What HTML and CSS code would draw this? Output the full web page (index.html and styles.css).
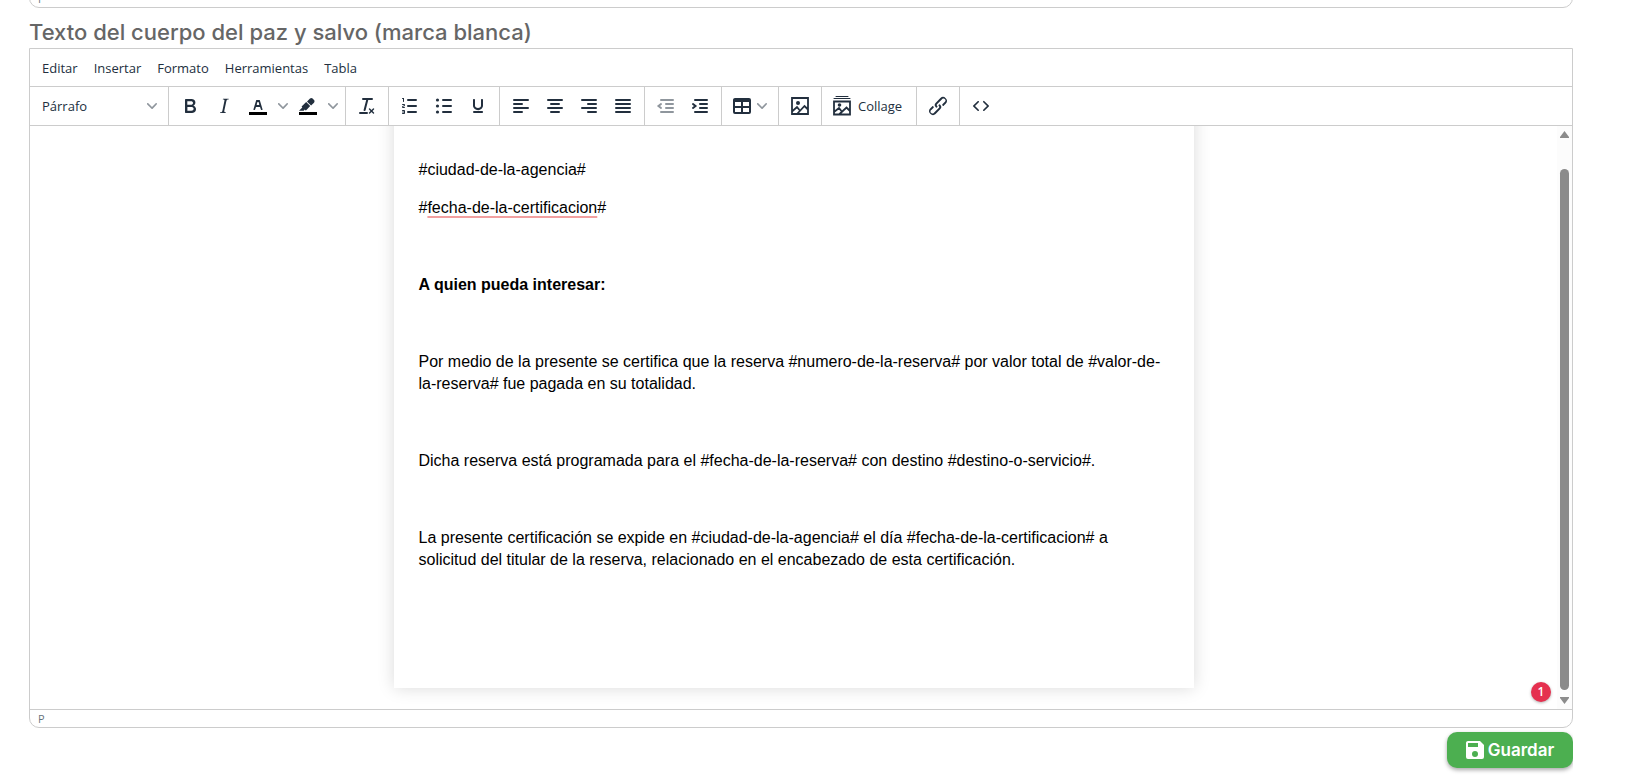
FILE: index.html
```html
<!DOCTYPE html>
<html lang="es">
<head>
	<meta charset="UTF-8">
	<title>Paz y salvo</title>
	<link rel="stylesheet" href="styles.css">
</head>
<body>
	<div class="wrap">
		<div class="editor prev">
			<div class="status">P</div>
		</div>

		<h2 class="title" id="titulo">Texto del cuerpo del paz y salvo (marca blanca)</h2>

		<div class="editor">
			<div class="menubar">
				<button type="button">Editar</button>
				<button type="button">Insertar</button>
				<button type="button">Formato</button>
				<button type="button">Herramientas</button>
				<button type="button">Tabla</button>
			</div>

			<div class="toolbar">
				<div class="group">
					<div class="select">
						<select aria-label="Formato de bloque">
							<option>Párrafo</option>
						</select>
						<svg class="arrow" viewBox="0 0 10 10"><path d="M8.7 2.2c.3-.3.8-.3 1 0 .4.4.4.9 0 1.2L5.7 7.8c-.3.3-.9.3-1.2 0L.2 3.4a.8.8 0 0 1 0-1.2c.3-.3.8-.3 1.1 0L5 6l3.7-3.8Z"/></svg>
					</div>
				</div>
				<div class="group">
					<button type="button" aria-label="Negrita"><svg viewBox="0 0 24 24"><path fill-rule="evenodd" d="M7.8 19c-.3 0-.5 0-.6-.2l-.2-.5V5.7c0-.2 0-.4.2-.5l.6-.2h5c1.5 0 2.7.3 3.5 1 .7.6 1.1 1.4 1.1 2.5a3 3 0 0 1-.6 1.9c-.4.6-1 1-1.6 1.2.4.1.9.3 1.3.6s.8.7 1 1.2c.4.4.5 1 .5 1.6 0 1.3-.4 2.3-1.3 3-.8.7-2.1 1-3.8 1H7.8Zm5-8.3c.6 0 1.2-.1 1.6-.5.4-.3.6-.7.6-1.3 0-1.1-.8-1.7-2.3-1.7H9.3v3.5h3.4Zm.5 6c.7 0 1.3-.1 1.7-.4.4-.4.6-.9.6-1.5s-.2-1-.7-1.4c-.4-.3-1-.4-2-.4H9.4v3.8h4Z"/></svg></button>
					<button type="button" aria-label="Cursiva"><svg viewBox="0 0 24 24"><path d="m16.7 4.7-.1.9h-.3c-.6 0-1 0-1.4.3-.3.3-.4.6-.5 1.1l-2.1 9.8v.6c0 .5.4.8 1.4.8h.2l-.2.8H8l.2-.8h.2c1.1 0 1.8-.5 2-1.5l2-9.8.1-.5c0-.6-.4-.8-1.4-.8h-.3l.2-.9h5.8Z"/></svg></button>
					<button type="button" class="split" aria-label="Color de texto">
						<svg viewBox="0 0 24 24"><path class="color" d="M3 18h18v3H3z"/><path fill-rule="evenodd" d="M8.7 16h-.8a.5.5 0 0 1-.5-.6l2.7-9c.1-.3.3-.4.5-.4h2.8c.2 0 .4.1.5.4l2.7 9a.5.5 0 0 1-.5.6h-.8a.5.5 0 0 1-.4-.4l-.7-2.2c0-.3-.3-.4-.5-.4h-3.4c-.2 0-.4.1-.5.4l-.7 2.2c0 .3-.2.4-.4.4Zm2.6-7.6-.6 2a.5.5 0 0 0 .5.6h1.6a.5.5 0 0 0 .5-.6l-.6-2c0-.3-.3-.4-.5-.4h-.4c-.2 0-.4.1-.5.4Z"/></svg>
						<svg class="arrow" viewBox="0 0 10 10"><path d="M8.7 2.2c.3-.3.8-.3 1 0 .4.4.4.9 0 1.2L5.7 7.8c-.3.3-.9.3-1.2 0L.2 3.4a.8.8 0 0 1 0-1.2c.3-.3.8-.3 1.1 0L5 6l3.7-3.8Z"/></svg>
					</button>
					<button type="button" class="split" aria-label="Color de fondo">
						<svg viewBox="0 0 24 24"><path class="color" d="M3 18h18v3H3z"/><path d="M7.7 16.7H3l3.3-3.3-.7-.8L10.2 8l4 4.1-4 4.2c-.2.2-.6.2-.8 0l-.6-.7-1.1 1.1Zm5-7.5L11 7.4l3-2.9a2 2 0 0 1 2.6 0L18 6c.7.7.7 2 0 2.7l-2.9 2.9-1.8-1.8-.6-.6Z"/></svg>
						<svg class="arrow" viewBox="0 0 10 10"><path d="M8.7 2.2c.3-.3.8-.3 1 0 .4.4.4.9 0 1.2L5.7 7.8c-.3.3-.9.3-1.2 0L.2 3.4a.8.8 0 0 1 0-1.2c.3-.3.8-.3 1.1 0L5 6l3.7-3.8Z"/></svg>
					</button>
				</div>
				<div class="group">
					<button type="button" aria-label="Borrar formato"><svg viewBox="0 0 24 24"><path d="M13.2 6a1 1 0 0 1 0 .2l-2.6 10a1 1 0 0 1-1 .8h-.2a.8.8 0 0 1-.8-1l2.6-10H8a1 1 0 1 1 0-2h9a1 1 0 0 1 0 2h-3.8ZM5 18h7a1 1 0 0 1 0 2H5a1 1 0 0 1 0-2Zm13 1.5L16.5 18 15 19.5a.7.7 0 0 1-1-1l1.5-1.5-1.5-1.5a.7.7 0 0 1 1-1l1.5 1.5 1.5-1.5a.7.7 0 0 1 1 1L17.5 17l1.5 1.5a.7.7 0 0 1-1 1Z"/></svg></button>
				</div>
				<div class="group">
					<button type="button" aria-label="Lista numerada"><svg viewBox="0 0 24 24"><path class="line" d="M10 6h8M10 12h8M10 18h8"/><path d="M6 4v3.5c0 .3-.2.5-.5.5a.5.5 0 0 1-.5-.5V5h-.5a.5.5 0 0 1 0-1H6Zm-1 8.8.2.2h1.3c.3 0 .5.2.5.5s-.2.5-.5.5H4.9a1 1 0 0 1-.9-1V13c0-.4.3-.8.6-1l1.2-.4.2-.3a.2.2 0 0 0-.2-.2H4.5a.5.5 0 0 1-.5-.5c0-.3.2-.5.5-.5h1.6c.5 0 .9.4.9 1v.1c0 .4-.3.8-.6 1l-1.2.4-.2.3ZM7 17v2c0 .6-.4 1-1 1H4.5a.5.5 0 0 1 0-1h1.2c.2 0 .3-.1.3-.3 0-.2-.1-.3-.3-.3H4.4a.4.4 0 1 1 0-.8h1.3c.2 0 .3-.1.3-.3 0-.2-.1-.3-.3-.3H4.5a.5.5 0 1 1 0-1H6c.6 0 1 .4 1 1Z"/></svg></button>
					<button type="button" aria-label="Lista de viñetas"><svg viewBox="0 0 24 24"><path class="line" d="M11 6h8M11 12h8M11 18h8"/><circle cx="5.5" cy="6" r="1.6"/><circle cx="5.5" cy="12" r="1.6"/><circle cx="5.5" cy="18" r="1.6"/></svg></button>
					<button type="button" aria-label="Subrayado"><svg viewBox="0 0 24 24"><path d="M16 5c.6 0 1 .4 1 1v5.5a4 4 0 0 1-.4 1.8l-1 1.4a5.3 5.3 0 0 1-5.5 1 5 5 0 0 1-1.6-1c-.5-.4-.8-.9-1.1-1.4a4 4 0 0 1-.4-1.8V6c0-.6.4-1 1-1s1 .4 1 1v5.5c0 .3 0 .6.2 1l.6.7a3.3 3.3 0 0 0 2.2.8 3.4 3.4 0 0 0 2.2-.8c.3-.2.4-.5.6-.8l.2-.9V6c0-.6.4-1 1-1ZM8 17h8c.6 0 1 .4 1 1s-.4 1-1 1H8a1 1 0 0 1 0-2Z"/></svg></button>
				</div>
				<div class="group">
					<button type="button" aria-label="Alinear a la izquierda"><svg viewBox="0 0 24 24"><path class="line" d="M5 6h14M5 10h8M5 14h14M5 18h8"/></svg></button>
					<button type="button" aria-label="Alinear al centro"><svg viewBox="0 0 24 24"><path class="line" d="M5 6h14M8 10h8M5 14h14M8 18h8"/></svg></button>
					<button type="button" aria-label="Alinear a la derecha"><svg viewBox="0 0 24 24"><path class="line" d="M5 6h14M11 10h8M5 14h14M11 18h8"/></svg></button>
					<button type="button" aria-label="Justificar"><svg viewBox="0 0 24 24"><path class="line" d="M5 6h14M5 10h14M5 14h14M5 18h14"/></svg></button>
				</div>
				<div class="group">
					<button type="button" aria-label="Disminuir sangría" disabled><svg viewBox="0 0 24 24"><path class="line" d="M7 6h12M12 10h7M12 14h7M7 18h12"/><path class="line" d="M7 10l-2.500 2L7 14"/></svg></button>
					<button type="button" aria-label="Incrementar sangría"><svg viewBox="0 0 24 24"><path class="line" d="M7 6h12M12 10h7M12 14h7M7 18h12"/><path class="line" d="M5 10l2.500 2L5 14"/></svg></button>
				</div>
				<div class="group">
					<button type="button" class="split menu" aria-label="Tabla">
						<svg viewBox="0 0 24 24"><path fill-rule="evenodd" d="M19 4a2 2 0 0 1 2 2v12a2 2 0 0 1-2 2H5a2 2 0 0 1-2-2V6c0-1.1.9-2 2-2h14ZM5 14v4h6v-4H5Zm14 0h-6v4h6v-4Zm0-6h-6v4h6V8ZM5 12h6V8H5v4Z"/></svg>
						<svg class="arrow" viewBox="0 0 10 10"><path d="M8.7 2.2c.3-.3.8-.3 1 0 .4.4.4.9 0 1.2L5.7 7.8c-.3.3-.9.3-1.2 0L.2 3.4a.8.8 0 0 1 0-1.2c.3-.3.8-.3 1.1 0L5 6l3.7-3.8Z"/></svg>
					</button>
				</div>
				<div class="group">
					<button type="button" aria-label="Imagen"><svg viewBox="0 0 24 24"><path class="thin" d="M4 4h16v16H4zM4 17.500l5-4.500 2 2.500M9 20l7.500-8 3.500 3.500"/><circle cx="10" cy="9" r="2"/></svg></button>
				</div>
				<div class="group">
					<button type="button" class="text"><svg viewBox="0 0 24 24"><path class="hair" d="M6 2.500h12M4 4.500h16"/><path class="thin" d="M4 7.500h16v13H4zM4 18l5-4 2 2.500M9 20.500l7.500-7 3.500 3.500"/><circle cx="9.500" cy="11" r="1.800"/></svg>Collage</button>
				</div>
				<div class="group">
					<button type="button" aria-label="Enlace"><svg viewBox="0 0 24 24"><path d="M6.2 12.3a1 1 0 0 1 1.4 1.4l-2 2a2 2 0 1 0 2.6 2.8l4.8-4.8a1 1 0 0 0 0-1.4 1 1 0 1 1 1.4-1.3 2.9 2.9 0 0 1 0 4L9.6 20a3.9 3.9 0 0 1-5.5-5.5l2-2Zm11.6-.6a1 1 0 0 1-1.4-1.4l2-2a2 2 0 1 0-2.6-2.8L11 10.3a1 1 0 0 0 0 1.4A1 1 0 1 1 9.6 13a2.9 2.9 0 0 1 0-4L14.4 4a3.9 3.9 0 0 1 5.5 5.5l-2 2Z"/></svg></button>
				</div>
				<div class="group">
					<button type="button" aria-label="Código fuente"><svg viewBox="0 0 24 24"><path d="M9.8 15.7c.3.3.3.8 0 1-.3.4-.9.4-1.2 0l-4.4-4.1a.8.8 0 0 1 0-1.2l4.4-4.2c.3-.3.9-.3 1.2 0 .3.3.3.8 0 1.1L6 12l3.8 3.7ZM14.2 15.7c-.3.3-.3.8 0 1 .4.4.9.4 1.2 0l4.4-4.1c.3-.3.3-.9 0-1.2l-4.4-4.2a.8.8 0 0 0-1.2 0c-.3.3-.3.8 0 1.1L18 12l-3.8 3.7Z"/></svg></button>
				</div>
			</div>

			<div class="content">
				<div class="view">
					<div class="page" contenteditable="true" spellcheck="false" role="textbox" aria-multiline="true" aria-labelledby="titulo">
						<p>#ciudad-de-la-agencia#</p>
						<p>#<span class="typo">fecha-de-la-certificacion</span>#</p>
						<p>&nbsp;</p>
						<p><strong>A quien pueda interesar:</strong></p>
						<p>&nbsp;</p>
						<p>Por medio de la presente se certifica que la reserva #numero-de-la-reserva# por valor total de #valor-de-la-reserva# fue pagada en su totalidad.</p>
						<p>&nbsp;</p>
						<p>Dicha reserva está programada para el #fecha-de-la-reserva# con destino #destino-o-servicio#.</p>
						<p>&nbsp;</p>
						<p>La presente certificación se expide en #ciudad-de-la-agencia# el día #fecha-de-la-certificacion# a solicitud del titular de la reserva, relacionado en el encabezado de esta certificación.</p>
						<p>&nbsp;</p>
						<p>&nbsp;</p>
					</div>
					<span class="badge">1</span>
				</div>
				<div class="scroll">
					<svg viewBox="0 0 9 7"><path d="M4.500 0 9 6v1H0V6z"/></svg>
					<div class="thumb"></div>
					<svg viewBox="0 0 9 7"><path d="M4.500 7 9 1V0H0v1z"/></svg>
				</div>
			</div>

			<div class="status">P</div>
		</div>

		<div class="actions">
			<button type="submit" class="save"><svg viewBox="0 0 18 18"><path fill-rule="evenodd" d="M2 0h12l4 4v12a2 2 0 0 1-2 2H2a2 2 0 0 1-2-2V2C0 .9.9 0 2 0Zm0 2v4h10V2H2Zm7 8a3 3 0 1 0 0 6 3 3 0 0 0 0-6Z"/></svg>Guardar</button>
		</div>
	</div>
</body>
</html>
```

FILE: styles.css
```css
*{
	box-sizing: border-box;
}
body{
	margin: 0;
	background: #fff;
	font-family: "Open Sans", "Noto Sans", sans-serif;
}
button, select{
	margin: 0;
	padding: 0;
	border: 0;
	background: none;
	color: #222f3e;
	font-family: inherit;
	font-size: 13px;
	cursor: pointer;
}
.wrap{
	margin: 0 77px 0 29px;
	overflow: hidden;
}
.editor{
	border: 1px solid #ccc;
	border-radius: 0 0 10px 10px;
}
/* end of the editor above, scrolled out of view */
.prev{
	margin-top: -12px;
}
.title{
	margin: 8px 0 0;
	height: 32px;
	line-height: 32px;
	font-family: Inter, sans-serif;
	font-size: 22px;
	font-weight: 500;
	color: #666;
}

/* menu */
.menubar{
	display: flex;
	height: 38px;
	padding: 0 4px;
	align-items: center;
	border-bottom: 1px solid #ccc;
}
.menubar button{
	height: 28px;
	padding: 0 8px;
}

/* toolbar */
.toolbar{
	display: flex;
	height: 39px;
	border-bottom: 1px solid #ccc;
}
.group{
	display: flex;
	align-items: center;
	padding: 0 4px;
	border-right: 1px solid #ccc;
}
.group:last-child{
	border-right: 0;
}
.group button{
	display: flex;
	width: 34px;
	height: 34px;
	align-items: center;
	justify-content: center;
}
.group svg{
	width: 24px;
	height: 24px;
	fill: #222f3e;
}
.group .line, .group .thin, .group .hair{
	fill: none;
	stroke: #222f3e;
	stroke-width: 2;
	stroke-linecap: round;
}
.group .thin{
	stroke-width: 1.8;
}
.group .hair{
	stroke-width: 1;
}
.group .color{
	fill: #000;
}
.group button:disabled svg{
	opacity: .5;
}
.group .split{
	width: 50px;
	justify-content: space-between;
	padding: 0 3px 0 5px;
}
.group .menu{
	width: 48px;
	padding: 0 7px 0 4px;
}
.group .arrow{
	width: 10px;
	height: 10px;
	opacity: .5;
}
.group .text{
	width: 86px;
	gap: 4px;
	padding: 0 4px;
	justify-content: flex-start;
}
.select{
	position: relative;
	width: 130px;
}
.select select{
	width: 100%;
	height: 34px;
	padding: 0 8px;
	appearance: none;
}
.select .arrow{
	position: absolute;
	top: 12px;
	right: 7px;
	pointer-events: none;
}

/* document */
.content{
	display: flex;
}
.view{
	position: relative;
	flex: 1;
	overflow: hidden;
}
.page{
	max-width: 800px;
	margin: -24px auto 21px;
	padding: 41px 25px 24px;
	box-shadow: 0 0 16px rgba(0,0,0,.15);
	font-family: "Liberation Sans", Arial, sans-serif;
	font-size: 16px;
	line-height: 1.4;
	color: #000;
	outline: 0;
}
.page p{
	margin: 16px 0;
}
.typo{
	text-decoration: underline 2px #f2a0a0;
	text-underline-offset: 3px;
	text-decoration-skip-ink: none;
}
.badge{
	position: absolute;
	right: 6px;
	bottom: 7px;
	width: 20px;
	height: 20px;
	border-radius: 50%;
	background: #e5304f;
	box-shadow: 0 1px 3px rgba(0,0,0,.3);
	color: #fff;
	font-size: 12px;
	font-weight: 600;
	line-height: 20px;
	text-align: center;
}
.scroll{
	display: flex;
	flex-direction: column;
	align-items: center;
	gap: 7px;
	width: 15px;
	padding: 5px 0;
	background: #fcfcfc;
}
.scroll svg{
	width: 9px;
	height: 7px;
	fill: #8b8b8b;
}
.thumb{
	flex: 1;
	width: 9px;
	margin-top: 24px;
	border-radius: 5px;
	background: #8b8b8b;
}
.status{
	height: 18px;
	padding: 0 8px;
	border-top: 1px solid #ccc;
	color: rgba(34,47,62,.7);
	font-size: 11px;
	line-height: 17px;
}

/* save */
.actions{
	display: flex;
	justify-content: flex-end;
	padding: 4px 0 8px;
}
.save{
	display: flex;
	align-items: center;
	justify-content: center;
	gap: 4px;
	width: 126px;
	height: 36px;
	border-radius: 10px;
	background: #4caf50;
	box-shadow: 0 2px 4px rgba(0,0,0,.35);
	color: #fff;
	font-family: Inter, sans-serif;
	font-size: 17px;
	font-weight: 600;
}
.save svg{
	width: 18px;
	height: 18px;
	fill: #fff;
}
```
